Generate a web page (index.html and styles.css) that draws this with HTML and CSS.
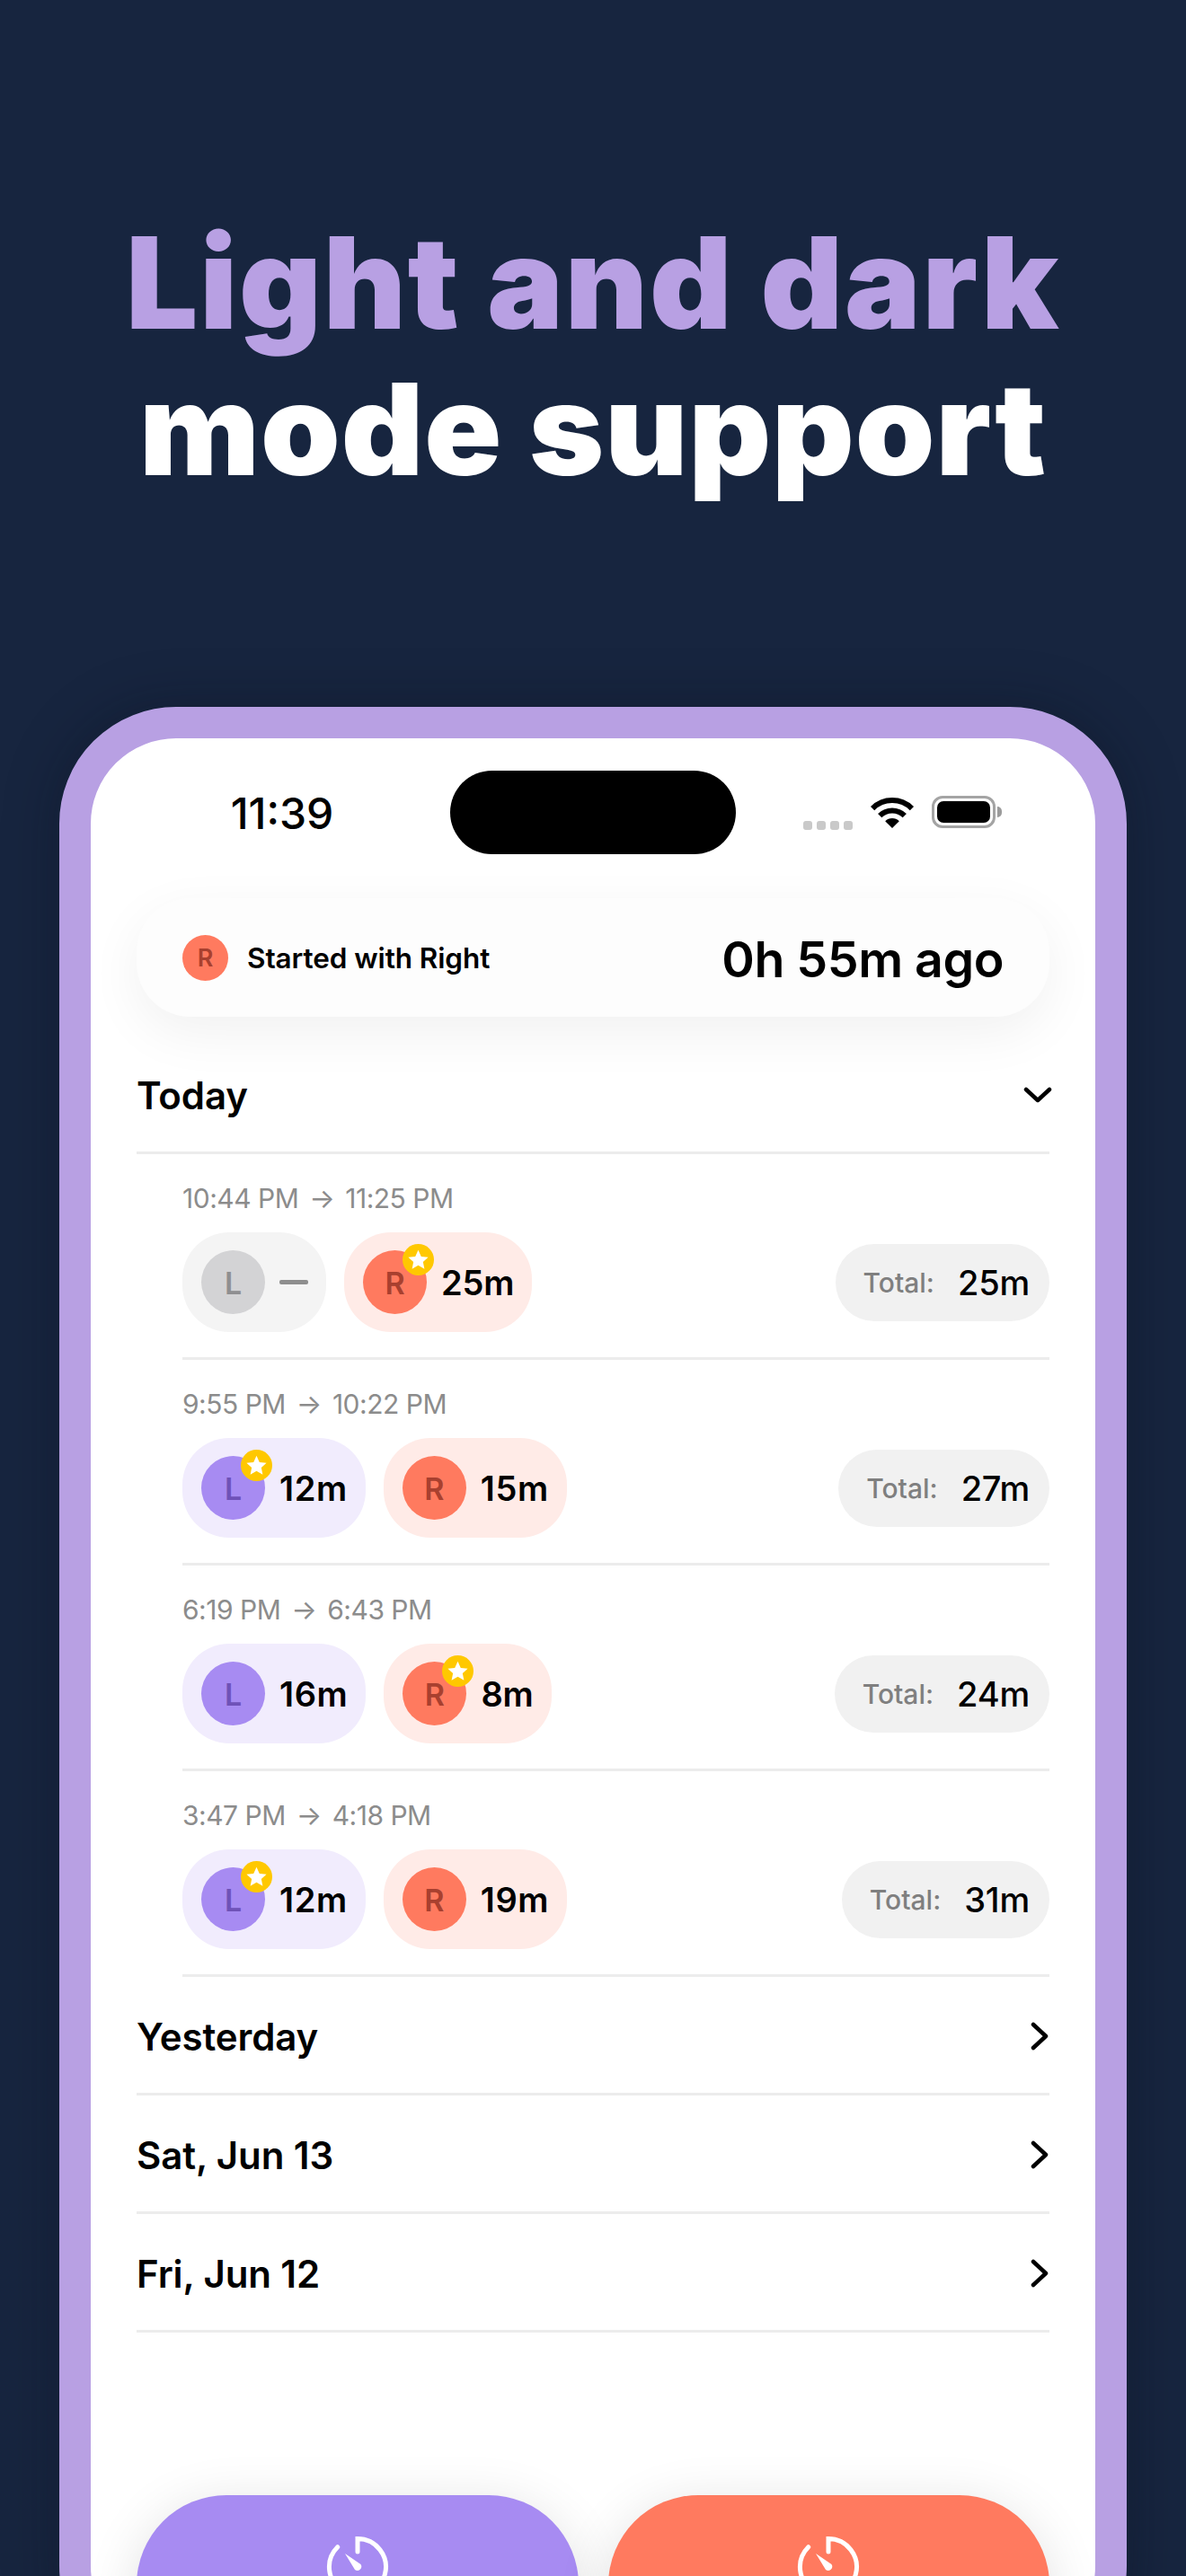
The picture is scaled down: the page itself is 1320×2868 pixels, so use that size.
FILE: index.html
```html
<!DOCTYPE html>
<html lang="en">
<head>
<meta charset="utf-8">
<title>Light and dark mode support</title>
<link rel="stylesheet" href="styles.css">
</head>
<body>
<main class="page">
  <h1 class="headline"><span class="accent">Light and dark</span><span class="plain">mode support</span></h1>
  <section class="phone">
    <div class="screen">
      <header class="status">
        <div class="clock">11:39</div>
        <div class="island"></div>
        <div class="indicators">
          <div class="dots"><i></i><i></i><i></i><i></i></div>
          <svg class="wifi" viewBox="0 0 50 37"><path class="wifi-arc" d="M3.100 14.100A31 31 0 0 1 46.900 14.100"/><path class="wifi-arc" d="M11.200 22.200A19.500 19.500 0 0 1 38.800 22.200"/><path d="M25 36 17.200 28.200A11 11 0 0 1 32.800 28.200Z"/></svg>
          <div class="battery"><div class="battery-fill"></div></div>
        </div>
      </header>

      <div class="started">
        <div class="started-left"><span class="dot-r">R</span><span class="started-label">Started with Right</span></div>
        <div class="started-time">0h 55m ago</div>
      </div>

      <div class="day-row day-open">
        <span>Today</span>
        <svg class="chev-down" viewBox="0 0 32 18"><path d="M3 3 16 15 29 3"/></svg>
      </div>

      <div class="sessions">
        <article class="session">
          <div class="range">10:44 PM <b>→</b> 11:25 PM</div>
          <div class="session-row">
            <div class="pill pill-off"><span class="side side-off">L</span><span class="dash"></span></div>
            <div class="pill pill-r"><span class="side side-r">R<svg class="star" viewBox="0 0 36 36"><circle cx="18" cy="18" r="18"/><path d="M18 7l3.400 7.300 8 .9-5.900 5.400 1.600 7.900-7.100-4-7.100 4 1.600-7.900-5.900-5.400 8-.9Z"/></svg></span><span class="mins">25m</span></div>
            <div class="total"><span class="total-label">Total:</span><span class="total-val">25m</span></div>
          </div>
        </article>
        <article class="session">
          <div class="range">9:55 PM <b>→</b> 10:22 PM</div>
          <div class="session-row">
            <div class="pill pill-l"><span class="side side-l">L<svg class="star" viewBox="0 0 36 36"><circle cx="18" cy="18" r="18"/><path d="M18 7l3.400 7.300 8 .9-5.900 5.400 1.600 7.900-7.100-4-7.100 4 1.600-7.900-5.900-5.400 8-.9Z"/></svg></span><span class="mins has-one">12m</span></div>
            <div class="pill pill-r"><span class="side side-r">R</span><span class="mins has-one">15m</span></div>
            <div class="total"><span class="total-label">Total:</span><span class="total-val">27m</span></div>
          </div>
        </article>
        <article class="session">
          <div class="range">6:19 PM <b>→</b> 6:43 PM</div>
          <div class="session-row">
            <div class="pill pill-l"><span class="side side-l">L</span><span class="mins has-one">16m</span></div>
            <div class="pill pill-r"><span class="side side-r">R<svg class="star" viewBox="0 0 36 36"><circle cx="18" cy="18" r="18"/><path d="M18 7l3.400 7.300 8 .9-5.900 5.400 1.600 7.900-7.100-4-7.100 4 1.600-7.900-5.900-5.400 8-.9Z"/></svg></span><span class="mins">8m</span></div>
            <div class="total"><span class="total-label">Total:</span><span class="total-val">24m</span></div>
          </div>
        </article>
        <article class="session">
          <div class="range">3:47 PM <b>→</b> 4:18 PM</div>
          <div class="session-row">
            <div class="pill pill-l"><span class="side side-l">L<svg class="star" viewBox="0 0 36 36"><circle cx="18" cy="18" r="18"/><path d="M18 7l3.400 7.300 8 .9-5.900 5.400 1.600 7.900-7.100-4-7.100 4 1.600-7.900-5.900-5.400 8-.9Z"/></svg></span><span class="mins has-one">12m</span></div>
            <div class="pill pill-r"><span class="side side-r">R</span><span class="mins has-one">19m</span></div>
            <div class="total"><span class="total-label">Total:</span><span class="total-val">31m</span></div>
          </div>
        </article>
      </div>

      <div class="day-row"><span>Yesterday</span><svg class="chev-right" viewBox="0 0 20 32"><path d="M3 3 17 16 3 29"/></svg></div>
      <div class="day-row"><span>Sat, Jun 13</span><svg class="chev-right" viewBox="0 0 20 32"><path d="M3 3 17 16 3 29"/></svg></div>
      <div class="day-row"><span>Fri, Jun 12</span><svg class="chev-right" viewBox="0 0 20 32"><path d="M3 3 17 16 3 29"/></svg></div>

      <div class="actions">
        <div class="action action-l"><svg class="timer" viewBox="0 0 76 76"><path d="M38 20V5.500A31.500 31.500 0 1 1 15.700 14.700"/><path class="needle" d="M24 22 41.500 34a4.500 4.500 0 0 1-6.500 6Z"/></svg></div>
        <div class="action action-r"><svg class="timer" viewBox="0 0 76 76"><path d="M38 20V5.500A31.500 31.500 0 1 1 15.700 14.700"/><path class="needle" d="M24 22 41.500 34a4.500 4.500 0 0 1-6.500 6Z"/></svg></div>
      </div>
    </div>
  </section>
</main>
</body>
</html>
```

FILE: styles.css
```css
* { box-sizing: border-box; }
html, body { margin: 0; padding: 0; }
body {
  background: #17253f;
  font-family: Inter, "Liberation Sans", sans-serif;
  color: #000;
}
.page {
  width: 1320px;
  height: 2868px;
  overflow: hidden;
  background: #17253f;
}
.headline {
  margin: 0;
  padding-top: 233px;
  height: 787px;
  text-align: center;
  font-size: 142px;
  line-height: 163px;
  font-weight: 900;
}
.headline span { display: block; }
.accent { color: #b8a0e3; letter-spacing: 1.800px; }
.plain { color: #fff; letter-spacing: 1px; }

.phone {
  margin: 0 66px;
  height: 2200px;
  border: 35px solid #b8a0e3;
  border-radius: 130px;
  background: #fff;
  box-shadow: 0 0 60px rgba(8, 14, 28, .35);
}
.screen { padding: 36px 51px 0; }

.status {
  height: 93px;
  display: flex;
  align-items: center;
  position: relative;
  justify-content: center;
}
.clock {
  position: absolute;
  left: 102px;
  width: 120px;
  text-align: center;
  font-size: 48px;
  font-weight: 500;
  top: 23px;
  line-height: 50px;
}
.island {
  width: 318px;
  height: 93px;
  border-radius: 47px;
  background: #000;
}
.indicators {
  position: absolute;
  left: 742px;
  top: 28px;
  display: flex;
  align-items: flex-start;
}
.dots { display: flex; gap: 5px; margin-top: 28px; width: 56px; }
.dots i { width: 10px; height: 10px; border-radius: 3px; background: #c9c9c9; }
.wifi { width: 50px; height: 37px; margin-left: 18px; fill: #000; }
.wifi-arc { fill: none; stroke: #000; stroke-width: 6; }
.battery {
  width: 71px;
  height: 36px;
  margin-left: 19px;
  border: 3px solid #a4a4a4;
  border-radius: 12px;
  padding: 3px;
  position: relative;
}
.battery::after {
  content: "";
  position: absolute;
  right: -10px;
  top: 9px;
  width: 5px;
  height: 12px;
  border-radius: 0 6px 6px 0;
  background: #9b9b9b;
}
.battery-fill { width: 100%; height: 100%; background: #000; border-radius: 7px; }

.started {
  margin-top: 49px;
  height: 132px;
  border-radius: 60px;
  background: #fdfdfd;
  box-shadow: 0 18px 60px rgba(0, 0, 0, .06);
  display: flex;
  align-items: center;
  justify-content: space-between;
  padding: 0 51px;
}
.started-left { display: flex; align-items: center; gap: 21px; }
.dot-r {
  width: 51px;
  height: 51px;
  border-radius: 50%;
  background: #ff7a5f;
  color: #a8402f;
  font-size: 27px;
  font-weight: 600;
  display: flex;
  align-items: center;
  justify-content: center;
}
.started-label { font-size: 31.500px; font-weight: 600; letter-spacing: -.1px; }
.started-time { font-size: 55.500px; font-weight: 600; letter-spacing: -.5px; margin-top: 2px; }

.day-row {
  height: 132px;
  padding-top: 3px;
  border-bottom: 3px solid #ececec;
  display: flex;
  align-items: center;
  justify-content: space-between;
  font-size: 42px;
  font-weight: 600;
  letter-spacing: -.1px;
}
.day-open { height: 153px; padding-top: 24px; }
.chev-down { width: 32px; height: 18px; margin-right: -3px; fill: none; stroke: #000; stroke-width: 4.500; stroke-linecap: round; stroke-linejoin: round; }
.chev-right { width: 20px; height: 32px; margin-right: 1px; fill: none; stroke: #000; stroke-width: 4.500; stroke-linecap: round; stroke-linejoin: round; }

.sessions { padding-left: 51px; }
.session {
  height: 229px;
  border-bottom: 3px solid #ececec;
  padding-top: 31px;
}
.range {
  height: 36px;
  line-height: 36px;
  font-size: 30px;
  color: #8c8c8c;
  letter-spacing: -.5px;
}
.range b { font-weight: 400; margin: 0 4px; }
.session-row {
  margin-top: 20px;
  display: flex;
  align-items: center;
  gap: 20px;
}
.pill {
  height: 111px;
  border-radius: 52px;
  display: flex;
  align-items: center;
  gap: 16px;
  padding: 0 20px 0 21px;
}
.pill-off { background: #f4f4f4; }
.pill-l { background: #f1ecfd; }
.pill-r { background: #ffebe7; }
.side {
  position: relative;
  width: 71px;
  height: 71px;
  border-radius: 50%;
  display: flex;
  align-items: center;
  justify-content: center;
  font-size: 34px;
  font-weight: 600;
  padding-top: 2px;
}
.side-off { background: #d3d3d5; color: #8f8f91; }
.side-l { background: #a78bf2; color: #6f52b8; }
.side-r { background: #ff7a5f; color: #a8402f; }
.star {
  position: absolute;
  width: 35px;
  height: 35px;
  right: -8px;
  top: -7px;
  fill: #ffc800;
}
.star path { fill: #fff; }
.dash { width: 32px; height: 5px; background: #8e8e8e; border-radius: 2px; }
.mins { font-size: 38px; font-weight: 600; letter-spacing: -.2px; }
.total {
  margin-left: auto;
  height: 86px;
  border-radius: 43px;
  background: #f1f1f1;
  display: flex;
  align-items: center;
  gap: 26px;
  padding: 0 22px 0 31px;
}
.total-label { font-size: 30px; font-weight: 500; color: #7f7f7f; }
.total-val { font-size: 38px; font-weight: 500; letter-spacing: -.2px; }
.has-one { letter-spacing: .6px; }

.actions {
  margin-top: 181px;
  display: flex;
  gap: 33px;
}
.action {
  flex: 1;
  height: 240px;
  border-radius: 100px;
  box-shadow: 0 10px 60px rgba(0, 0, 0, .12);
  display: flex;
  justify-content: center;
  padding-top: 43px;
}
.action-l { background: #a78bf2; }
.action-r { background: #ff7a5f; }
.timer { width: 76px; height: 76px; fill: none; stroke: #fff; stroke-width: 5; stroke-linecap: round; }
.needle { fill: #fff; stroke: none; }
```
